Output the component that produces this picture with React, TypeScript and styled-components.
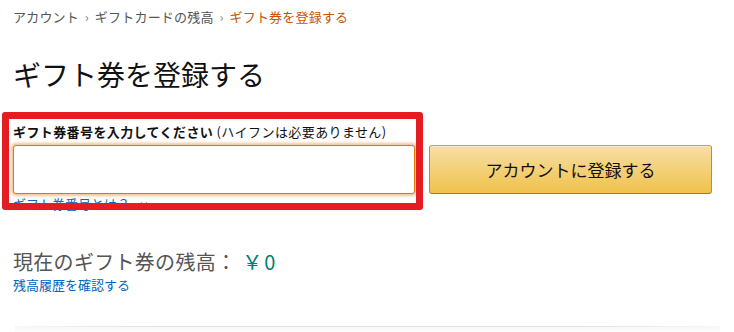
import React from 'react';
import styled, { createGlobalStyle } from 'styled-components';

const GlobalStyle = createGlobalStyle`
    html, body {
        margin: 0;
        padding: 0;
        background: #fff;
    }
    body {
        font-family: "Noto Sans CJK JP", "Noto Sans", sans-serif;
        color: #111;
    }
`;

const Page = styled.div`
    width: 734px;
    height: 332px;
    overflow: hidden;
    padding: 7px 0 0 13px;
    box-sizing: border-box;
`;

const Breadcrumb = styled.div`
    display: flex;
    align-items: center;
    font-size: 13px;
    line-height: 19px;
    letter-spacing: 0.2px;
    color: #555;
`;

const Crumb = styled.span<{ current?: boolean }>`
    color: ${props => props.current ? '#c45500' : '#555'};
`;

const Sep = styled.span`
    color: #777;
    margin: 0 6px;
    font-size: 12px;
`;

const Title = styled.h1`
    margin: 30px 0 0;
    font-size: 28px;
    line-height: 36px;
    font-weight: 400;
    color: #111;
`;

const FormSection = styled.div`
    position: relative;
    margin-top: 30px;
    display: grid;
    grid-template-columns: 402px 283px;
    column-gap: 14px;
    row-gap: 4px;
`;

const Label = styled.div`
    grid-column: 1 / 3;
    font-size: 13px;
    line-height: 19px;
    letter-spacing: 0.4px;
    color: #111;
    b {
        font-weight: 700;
    }
`;

const CodeInput = styled.input`
    height: 49px;
    box-sizing: border-box;
    border: 1px solid #e77600;
    border-radius: 3px;
    box-shadow: 0 0 3px 2px rgba(228, 121, 17, 0.45);
    outline: none;
    padding: 0 8px;
    font-size: 17px;
`;

const RegisterButton = styled.button`
    height: 49px;
    box-sizing: border-box;
    border: 1px solid #a88734;
    border-color: #c5a24a #b1923f #9c7e31;
    border-radius: 3px;
    background: linear-gradient(to bottom, #f7dfa5, #f0c14b);
    box-shadow: inset 0 1px 0 rgba(255, 255, 255, 0.4);
    font-family: "Noto Sans CJK JP", sans-serif;
    font-size: 17px;
    color: #111;
    padding: 0;
`;

const HelpLink = styled.a`
    grid-column: 1;
    margin-top: -4px;
    display: flex;
    align-items: center;
    gap: 10px;
    font-size: 13px;
    line-height: 19px;
    color: #0066c0;
    text-decoration: none;
`;

const Highlight = styled.div`
    position: absolute;
    left: -11px;
    top: -10px;
    width: 421px;
    height: 98px;
    box-sizing: border-box;
    border: 7px solid #e41d23;
    border-radius: 3px;
    pointer-events: none;
`;

const Balance = styled.div`
    margin-top: 36px;
    font-size: 20px;
    line-height: 26px;
    letter-spacing: 0.3px;
    color: #555;
`;

const Amount = styled.span`
    color: #007d76;
    margin-left: 6px;
    letter-spacing: 2px;
`;

const HistoryLink = styled.a`
    display: block;
    font-size: 13px;
    line-height: 19px;
    color: #0066c0;
    text-decoration: none;
`;

const Divider = styled.div`
    margin: 31px 14px 0 2px;
    height: 8px;
    border-top: 1px solid transparent;
    background:
        linear-gradient(to right, rgba(0,0,0,0), rgba(0,0,0,0.09) 20%, rgba(0,0,0,0.09) 80%, rgba(0,0,0,0)) top / 100% 1px no-repeat,
        linear-gradient(to bottom, rgba(0,0,0,0.035), rgba(0,0,0,0));
`;

const App = () => {
    return (
        <Page>
            <GlobalStyle />
            <Breadcrumb>
                <Crumb>アカウント</Crumb>
                <Sep>›</Sep>
                <Crumb>ギフトカードの残高</Crumb>
                <Sep>›</Sep>
                <Crumb current>ギフト券を登録する</Crumb>
            </Breadcrumb>
            <Title>ギフト券を登録する</Title>
            <FormSection>
                <Label>
                    <b>ギフト券番号を入力してください</b> (ハイフンは必要ありません)
                </Label>
                <CodeInput type="text" />
                <RegisterButton>アカウントに登録する</RegisterButton>
                <HelpLink href="#">
                    ギフト券番号とは？
                    <svg width="8" height="6" viewBox="0 0 8 6" fill="none">
                        <path d="M1 1.5L4 4.5L7 1.5" stroke="#888" strokeWidth="1.2" />
                    </svg>
                </HelpLink>
                <Highlight />
            </FormSection>
            <Balance>
                現在のギフト券の残高：<Amount>￥0</Amount>
            </Balance>
            <HistoryLink href="#">残高履歴を確認する</HistoryLink>
            <Divider />
        </Page>
    );
};

export default App;
